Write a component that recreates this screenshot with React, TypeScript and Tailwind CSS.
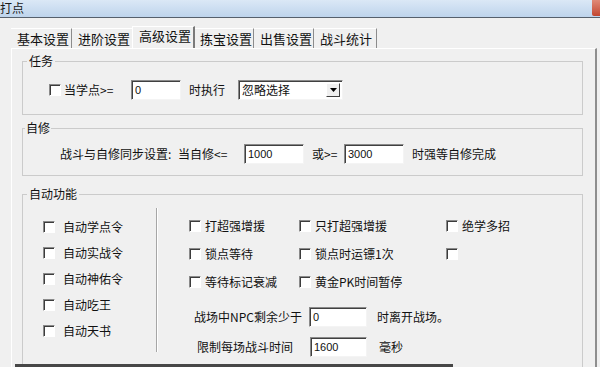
const Check = () => (
  <span className="inline-block w-[12px] h-[12px] shrink-0 bg-white border border-[#8a8a8a] border-r-white border-b-white shadow-[inset_1px_1px_0_#3c3c3c]" />
);

const CheckItem = ({ label, gap = "gap-[4px]" }: { label?: string; gap?: string }) => (
  <div className={`flex items-center ${gap}`}>
    <Check />
    {label && <span>{label}</span>}
  </div>
);

const Field = ({ value, width }: { value: string; width: string }) => (
  <div
    className={`${width} h-[20px] shrink-0 bg-white border border-[#8a8a8a] border-r-[#f4f4f4] border-b-[#f4f4f4] shadow-[inset_1px_1px_0_#404040] pl-[3px] flex items-center text-[11px] font-['Liberation_Sans',sans-serif]`}
  >
    {value}
  </div>
);

const tabs = [
  { name: "基本设置", w: "w-[61px]", sep: true },
  { name: "进阶设置", w: "w-[61px]", sep: false },
  { name: "高级设置", w: "w-[63px]", sep: true, active: true },
  { name: "拣宝设置", w: "w-[60px]", sep: true },
  { name: "出售设置", w: "w-[60px]", sep: true },
  { name: "战斗统计", w: "w-[63px]", sep: true },
];

const leftChecks = ["自动学点令", "自动实战令", "自动神佑令", "自动吃王", "自动天书"];

const App = () => {
  return (
    <div className="relative w-[600px] h-[367px] overflow-hidden bg-[#f0f0f0] text-[12px] text-[#111] font-['Noto_Sans_CJK_SC','Noto_Sans',sans-serif] flex flex-col">
      {/* title bar */}
      <div className="h-[18px] shrink-0 flex justify-between bg-gradient-to-b from-[#dbe8f6] to-[#bed4ec] border-b border-[#56606c]">
        <span className="text-[12px] leading-[15px] text-[#1a1a1a]">打点</span>
        <div className="w-[8px] h-[16px] bg-gradient-to-b from-[#e08a78] to-[#c2452f] rounded-bl-[2px]" />
      </div>

      {/* tabs */}
      <div className="h-[30px] shrink-0 flex items-end pl-[11px]">
        {tabs.map((t) =>
          t.active ? (
            <div
              key={t.name}
              className={`${t.w} h-[22px] pl-[6px] pb-[4px] flex items-center border-t border-l border-white border-r-2 border-r-[#7a7a7a] -mx-[1px] relative z-10 bg-[#f0f0f0] text-[13px]`}
            >
              {t.name}
            </div>
          ) : (
            <div
              key={t.name}
              className={`${t.w} h-[20px] pl-[6px] flex items-center text-[13px] border-t border-white ${
                t.sep ? "border-r border-r-[#8c8c8c]" : ""
              }`}
            >
              {t.name}
            </div>
          )
        )}
      </div>

      {/* tab panel */}
      <div className="flex-1 ml-[11px] mr-[3px] border-t border-l border-white border-r-2 border-r-[#8e8e8e] pl-[10px] pr-[12px] pt-[5px]">
        {/* 任务 */}
        <fieldset className="border border-[#cbcbcb] pb-[14px]">
          <legend className="ml-[4px] px-[2px] leading-[14px]">任务</legend>
          <div className="pt-[12px] pl-[26px] flex items-center h-[32px]">
            <Check />
            <span className="ml-[3px] w-[67px]">当学点&gt;=</span>
            <Field value="0" width="w-[50px]" />
            <span className="ml-[8px] w-[49px]">时执行</span>
            <div className="w-[105px] h-[20px] bg-white border border-[#8a8a8a] border-r-[#f4f4f4] border-b-[#f4f4f4] shadow-[inset_1px_1px_0_#404040] flex items-center justify-between pl-[3px] pr-[2px]">
              <span>忽略选择</span>
              <div className="w-[14px] h-[14px] bg-[#f0f0f0] border border-white border-r-[#404040] border-b-[#404040] flex items-center justify-center">
                <svg width="7" height="4" viewBox="0 0 7 4">
                  <path d="M0 0h7L3.5 4z" fill="#000" />
                </svg>
              </div>
            </div>
          </div>
        </fieldset>

        {/* 自修 */}
        <fieldset className="mt-[6px] border border-[#cbcbcb] pb-[11px]">
          <legend className="ml-[2px] px-[1px] leading-[14px]">自修</legend>
          <div className="pt-[9px] pl-[37px] flex items-center h-[29px]">
            <span className="w-[118px]">战斗与自修同步设置:</span>
            <span className="w-[66px]">当自修&lt;=</span>
            <Field value="1000" width="w-[60px]" />
            <span className="ml-[8px] w-[32px]">或&gt;=</span>
            <Field value="3000" width="w-[60px]" />
            <span className="ml-[8px]">时强等自修完成</span>
          </div>
        </fieldset>

        {/* 自动功能 */}
        <fieldset className="mt-[11px] border border-[#cbcbcb] h-[200px]">
          <legend className="ml-[4px] px-[2px] leading-[14px]">自动功能</legend>
          <div className="flex">
            <div className="w-[133px] pl-[20px] pt-[13px] flex flex-col">
              {leftChecks.map((l) => (
                <div key={l} className="h-[26px] flex items-center">
                  <CheckItem label={l} gap="gap-[8px]" />
                </div>
              ))}
            </div>

            <div className="mt-[7px] h-[144px] w-[2px] border-l border-[#a6a6a6] border-r border-r-white" />

            <div className="pl-[31px] pt-[11px] flex flex-col">
              <div className="grid grid-cols-[110px_147px_100px] auto-rows-[28px] items-center">
                <CheckItem label="打超强增援" />
                <CheckItem label="只打超强增援" />
                <CheckItem label="绝学多招" />
                <CheckItem label="锁点等待" />
                <CheckItem label="锁点时运镖1次" />
                <CheckItem />
                <CheckItem label="等待标记衰减" />
                <CheckItem label="黄金PK时间暂停" />
              </div>

              <div className="mt-[10px] h-[22px] flex items-center">
                <span className="ml-[5px] w-[115px]">战场中NPC剩余少于</span>
                <Field value="0" width="w-[58px]" />
                <span className="ml-[10px]">时离开战场。</span>
              </div>

              <div className="mt-[8px] h-[22px] flex items-center">
                <span className="ml-[8px] w-[113px]">限制每场战斗时间</span>
                <Field value="1600" width="w-[57px]" />
                <span className="ml-[12px]">毫秒</span>
              </div>
            </div>
          </div>
        </fieldset>
      </div>

      {/* edge of a window lying over the bottom */}
      <div className="absolute left-[15px] top-[364px] w-[438px] h-[3px] bg-[#474747]" />
    </div>
  );
};

export default App;
